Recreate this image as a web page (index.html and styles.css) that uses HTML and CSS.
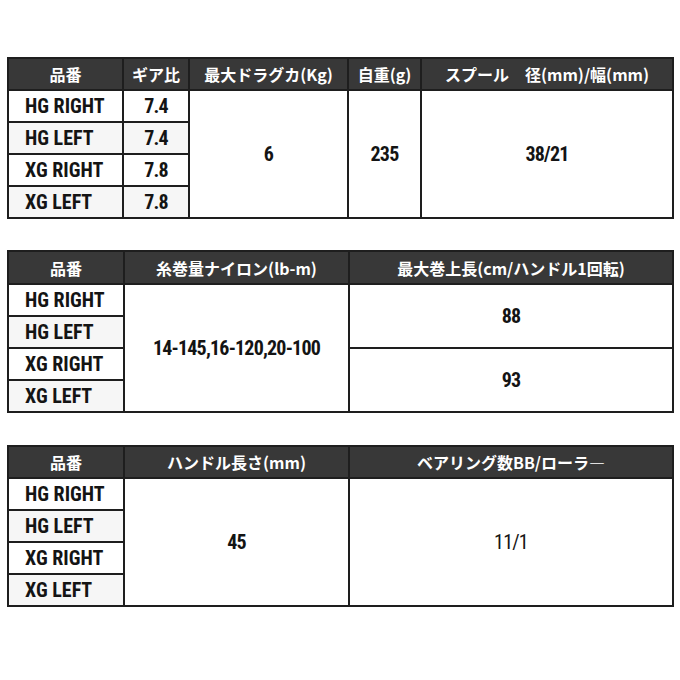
FILE: index.html
```html
<!DOCTYPE html>
<html lang="ja">
<head>
<meta charset="utf-8">
<link rel="stylesheet" href="styles.css">
</head>
<body>
<div class="page">
  <div class="spec t1">
    <div class="h">品番</div>
    <div class="h">ギア比</div>
    <div class="h">最大ドラグカ(Kg)</div>
    <div class="h">自重(g)</div>
    <div class="h">スプール　径(mm)/幅(mm)</div>

    <div class="c name r2">HG RIGHT</div>
    <div class="c num r2 k2">7.4</div>
    <div class="c num span4 c3">6</div>
    <div class="c num span4 c4">235</div>
    <div class="c num span4 c5">38/21</div>

    <div class="c name r3 alt">HG LEFT</div>
    <div class="c num r3 k2 alt">7.4</div>
    <div class="c name r4">XG RIGHT</div>
    <div class="c num r4 k2">7.8</div>
    <div class="c name r5 alt">XG LEFT</div>
    <div class="c num r5 k2 alt">7.8</div>
  </div>

  <div class="spec t2">
    <div class="h">品番</div>
    <div class="h">糸巻量ナイロン(lb-m)</div>
    <div class="h">最大巻上長(cm/ハンドル1回転)</div>

    <div class="c name r2">HG RIGHT</div>
    <div class="c num span4 c2">14-145,16-120,20-100</div>
    <div class="c num span2a c3">88</div>
    <div class="c num span2b c3">93</div>
    <div class="c name r3 alt">HG LEFT</div>
    <div class="c name r4">XG RIGHT</div>
    <div class="c name r5 alt">XG LEFT</div>
  </div>

  <div class="spec t3">
    <div class="h">品番</div>
    <div class="h">ハンドル長さ(mm)</div>
    <div class="h">ベアリング数BB/ローラ―</div>

    <div class="c name r2">HG RIGHT</div>
    <div class="c num span4 c2">45</div>
    <div class="c num span4 c3 light">11/1</div>
    <div class="c name r3 alt">HG LEFT</div>
    <div class="c name r4">XG RIGHT</div>
    <div class="c name r5 alt">XG LEFT</div>
  </div>
</div>
</body>
</html>
```

FILE: styles.css
```css
html, body {
  margin: 0;
  padding: 0;
  background: #ffffff;
}

.page {
  padding: 57px 0 0 7px;
  display: flex;
  flex-direction: column;
  gap: 31px;
}

.spec {
  display: grid;
  width: 667px;
  box-sizing: border-box;
  background: #1e1e1e;
  padding: 2px;
  gap: 2px;
  grid-template-rows: 30px repeat(4, 30px);
}

.t1 {
  grid-template-columns: 113px 64px 157px 71px 250px;
}

.t2 {
  grid-template-columns: 114px 223px 322px;
  grid-template-rows: 31px repeat(4, 30px);
  margin-bottom: 1px;
}

.t3 {
  grid-template-columns: 114px 223px 322px;
}

.h {
  background: #383838;
  color: #ffffff;
  font-family: "Noto Sans CJK JP", sans-serif;
  font-weight: 700;
  font-size: 16px;
  display: flex;
  align-items: center;
  justify-content: center;
  white-space: nowrap;
  grid-row: 1;
}

.c {
  background: #ffffff;
  color: #141414;
  font-family: "Roboto Condensed", "Noto Sans CJK JP", sans-serif;
  font-weight: 700;
  font-size: 20px;
  display: flex;
  align-items: center;
  justify-content: center;
  white-space: nowrap;
  grid-column: 1;
}

.name {
  justify-content: flex-start;
  padding-left: 16px;
}

.num {
  letter-spacing: -0.8px;
}

.r2 { grid-row: 2; }
.r3 { grid-row: 3; }
.r4 { grid-row: 4; }
.r5 { grid-row: 5; }

.alt { background: #f6f6f6; }

.span4 { grid-row: 2 / span 4; }
.span2a { grid-row: 2 / span 2; }
.span2b { grid-row: 4 / span 2; }

.k2, .c2 { grid-column: 2; }
.c3 { grid-column: 3; }
.c4 { grid-column: 4; }
.c5 { grid-column: 5; }

.light { font-weight: 400; }
```
